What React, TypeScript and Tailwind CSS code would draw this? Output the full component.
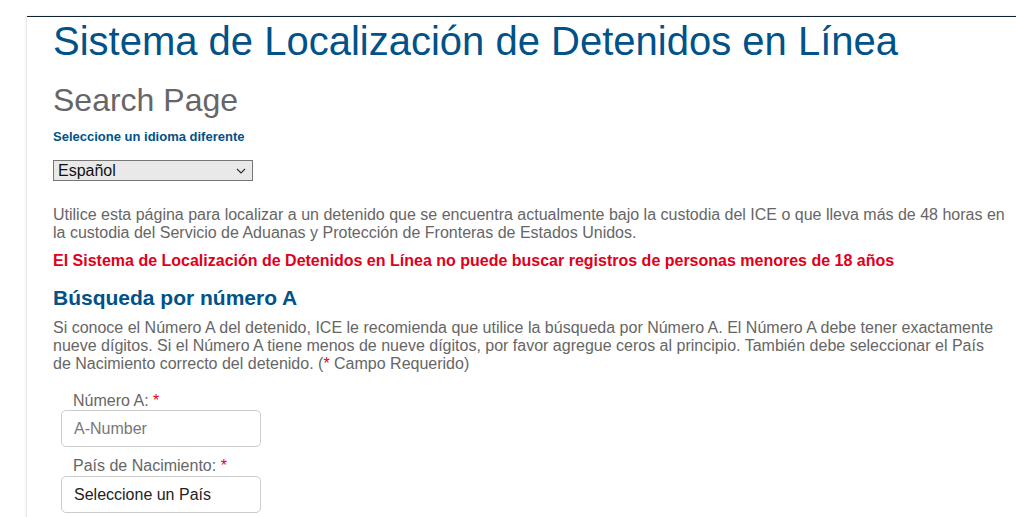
import React from "react";

export default function App() {
  return (
    <div className="w-[1016px] h-[517px] overflow-hidden bg-white" style={{ fontFamily: '"Liberation Sans", Arial, sans-serif' }}>
      <div className="ml-[27px] mt-[16px] w-[1010px] border-t border-[#0f2233] shadow-[-1px_0_2px_rgba(0,0,0,0.12)] pl-[26px] pb-10">
        <div className="w-[953px]">
          <h1 className="text-[40px] leading-[44px] text-[#005288] pt-[2px]">Sistema de Localización de Detenidos en Línea</h1>
          <h2 className="text-[32px] leading-[36px] text-[#666666] mt-[19px]">Search Page</h2>
          <div className="text-[13px] leading-[16px] font-bold text-[#005288] mt-[11px]">Seleccione un idioma diferente</div>
          <div className="mt-[15px] w-[200px] h-[21px] border border-[#767676] bg-[#e9e9e9] flex items-center justify-between pl-[4px] pr-[6px]">
            <span className="text-[16px] text-[#111]">Español</span>
            <svg width="10" height="6" viewBox="0 0 10 6"><path d="M1 1l4 4 4-4" fill="none" stroke="#333" strokeWidth="1.2" /></svg>
          </div>
          <p className="text-[16px] leading-[18px] text-[#666666] mt-[25px]">
            Utilice esta página para localizar a un detenido que se encuentra actualmente bajo la custodia del ICE o que lleva más de 48 horas en la custodia del Servicio de Aduanas y Protección de Fronteras de Estados Unidos.
          </p>
          <p className="text-[16px] leading-[18px] font-bold text-[#e0001b] mt-[10px]">
            El Sistema de Localización de Detenidos en Línea no puede buscar registros de personas menores de 18 años
          </p>
          <h3 className="text-[21px] leading-[24px] font-bold text-[#005288] mt-[16px]">Búsqueda por número A</h3>
          <p className="text-[16px] leading-[18px] text-[#666666] mt-[9px] max-w-[948px]">
            Si conoce el Número A del detenido, ICE le recomienda que utilice la búsqueda por Número A. El Número A debe tener exactamente nueve dígitos. Si el Número A tiene menos de nueve dígitos, por favor agregue ceros al principio. También debe seleccionar el País de Nacimiento correcto del detenido. (<span className="text-[#e0001b]">*</span> Campo Requerido)
          </p>
          <div className="ml-[8px] mt-[19px]">
            <label className="block pl-[12px] text-[16px] leading-[18px] text-[#666666]">Número A: <span className="text-[#e0001b]">*</span></label>
            <div className="mt-0 w-[200px] h-[37px] border border-[#cccccc] rounded-[5px] flex items-center pl-[12px] text-[16px] text-[#777777]">A-Number</div>
            <label className="block pl-[12px] mt-[10px] text-[16px] leading-[18px] text-[#666666]">País de Nacimiento: <span className="text-[#e0001b]">*</span></label>
            <div className="mt-[1px] w-[200px] h-[37px] border border-[#cccccc] rounded-[5px] flex items-center pl-[12px] text-[16px] text-[#222222]">Seleccione un País</div>
          </div>
        </div>
      </div>
    </div>
  );
}
